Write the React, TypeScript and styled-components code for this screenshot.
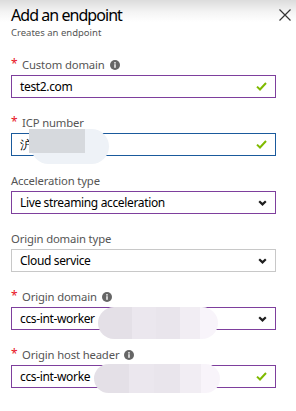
import styled, { createGlobalStyle } from "styled-components";

const GlobalStyle = createGlobalStyle`
  html, body {
    margin: 0;
    padding: 0;
    background: #fff;
  }
  body {
    font-family: "Segoe UI", "Noto Sans", "Open Sans", sans-serif;
  }
`;

const colors = {
  purple: "#7e3f9d",
  blue: "#1a5a9c",
  gray: "#c8c8c8",
  label: "#555555",
  green: "#7fba00",
  red: "#e81123",
};

type BlobSpec = {
  left: number;
  top: number;
  w: number;
  h: number;
  radius: string;
  fill: string;
};

type FieldSpec = {
  label: string;
  required?: boolean;
  info?: boolean;
  kind: "input" | "select";
  value: string;
  border: "purple" | "blue" | "gray";
  blobs?: BlobSpec[];
};

const pixelFill =
  "linear-gradient(90deg, #e4e0e7 0 28%, #ebe7ee 28% 48%, #e9e5ec 48% 68%, #f1edf3 68% 85%, #f8f4fa 85%)";

const fields: FieldSpec[] = [
  { label: "Custom domain", required: true, info: true, kind: "input", value: "test2.com", border: "purple" },
  {
    label: "ICP number",
    required: true,
    kind: "input",
    value: "沪",
    border: "blue",
    blobs: [
      { left: 19, top: -5, w: 78, h: 35, radius: "4px 18px 18px 18px", fill: "#eef2f7" },
      { left: 17, top: -5, w: 56, h: 24, radius: "0", fill: "#d6d9dd" },
    ],
  },
  { label: "Acceleration type", kind: "select", value: "Live streaming acceleration", border: "purple" },
  { label: "Origin domain type", kind: "select", value: "Cloud service", border: "gray" },
  {
    label: "Origin domain",
    required: true,
    info: true,
    kind: "select",
    value: "ccs-int-worker",
    border: "purple",
    blobs: [{ left: 86, top: -1, w: 120, h: 32, radius: "16px", fill: pixelFill }],
  },
  {
    label: "Origin host header",
    required: true,
    info: true,
    kind: "input",
    value: "ccs-int-worke",
    border: "purple",
    blobs: [{ left: 82, top: -2, w: 126, h: 29, radius: "15px", fill: pixelFill }],
  },
];

function InfoIcon() {
  return (
    <InfoBadge>
      <svg width="10" height="10" viewBox="0 0 10 10">
        <circle cx="5" cy="5" r="5" fill="#666" />
        <rect x="4.3" y="4.2" width="1.4" height="3.6" fill="#fff" />
        <circle cx="5" cy="2.8" r="0.85" fill="#fff" />
      </svg>
    </InfoBadge>
  );
}

function CheckIcon() {
  return (
    <svg width="11" height="9" viewBox="0 0 11 9">
      <path d="M1 4.6 L4 7.5 L10 1" fill="none" stroke={colors.green} strokeWidth="2" />
    </svg>
  );
}

function ChevronIcon() {
  return (
    <svg width="9" height="6" viewBox="0 0 9 6">
      <path d="M1.2 1.2 L4.5 4.4 L7.8 1.2" fill="none" stroke="#1e1e1e" strokeWidth="2.2" />
    </svg>
  );
}

export default function App() {
  return (
    <>
      <GlobalStyle />
      <Page>
        <Header>
          <div>
            <Title>Add an endpoint</Title>
            <Subtitle>Creates an endpoint</Subtitle>
          </div>
          <CloseButton aria-label="Close">
            <svg width="12" height="12" viewBox="0 0 12 12">
              <path d="M0.5 0.5 L11.5 11.5 M11.5 0.5 L0.5 11.5" stroke="#333" strokeWidth="1.2" />
            </svg>
          </CloseButton>
        </Header>
        <Form>
          {fields.map((f) => (
            <Field key={f.label}>
              <Label>
                {f.required && <Star>*</Star>}
                <LabelText>{f.label}</LabelText>
                {f.info && <InfoIcon />}
              </Label>
              <Box $border={colors[f.border]}>
                <Value>{f.value}</Value>
                {f.kind === "input" ? <CheckIcon /> : <ChevronIcon />}
                {f.blobs?.map((b, i) => (
                  <Blob key={i} $left={b.left} $top={b.top} $w={b.w} $h={b.h} $radius={b.radius} $fill={b.fill} />
                ))}
              </Box>
            </Field>
          ))}
        </Form>
      </Page>
    </>
  );
}

const Page = styled.div`
  width: 296px;
  height: 411px;
  overflow: hidden;
  background: linear-gradient(#dcdcdc 0, #f4f4f4 12px, #ffffff 22px) no-repeat;
  box-sizing: border-box;
  padding: 0 20px 0 11px;
`;

const Header = styled.div`
  display: flex;
  justify-content: space-between;
  align-items: flex-start;
  padding-top: 3px;
  margin-right: -15px;
`;

const Title = styled.h1`
  margin: 0;
  font-size: 16px;
  letter-spacing: -0.95px;
  line-height: 24px;
  font-weight: 400;
  color: #000;
`;

const Subtitle = styled.div`
  font-size: 9.5px;
  line-height: 12px;
  color: #555;
`;

const CloseButton = styled.button`
  border: none;
  background: none;
  padding: 0;
  margin-top: 6px;
  width: 12px;
  height: 12px;
  display: flex;
  cursor: pointer;
`;

const Form = styled.div`
  display: flex;
  flex-direction: column;
  gap: 17px;
  margin-top: 18px;
`;

const Field = styled.div`
  display: flex;
  flex-direction: column;
  gap: 3px;
`;

const Label = styled.div`
  display: flex;
  align-items: center;
  height: 15px;
  font-size: 11.3px;
  letter-spacing: -0.15px;
  color: ${colors.label};
`;

const Star = styled.span`
  color: ${colors.red};
  font-size: 12px;
  width: 11px;
  align-self: flex-start;
  line-height: 13px;
`;

const LabelText = styled.span`
  line-height: 15px;
`;

const InfoBadge = styled.span`
  display: inline-flex;
  margin-left: 5px;
`;

const Box = styled.div<{ $border: string }>`
  position: relative;
  height: 23px;
  box-sizing: border-box;
  border: 1px solid ${({ $border }) => $border};
  display: flex;
  align-items: center;
  justify-content: space-between;
  padding: 0 4px 0 8px;
  background: #fff;
  & > svg {
    margin-right: 4px;
  }
`;

const Value = styled.span`
  font-size: 12px;
  letter-spacing: -0.35px;
  color: #000;
  white-space: nowrap;
`;

const Blob = styled.div<{ $left: number; $top: number; $w: number; $h: number; $radius: string; $fill: string }>`
  position: absolute;
  left: ${({ $left }) => $left}px;
  top: ${({ $top }) => $top}px;
  width: ${({ $w }) => $w}px;
  height: ${({ $h }) => $h}px;
  border-radius: ${({ $radius }) => $radius};
  background: ${({ $fill }) => $fill};
`;
